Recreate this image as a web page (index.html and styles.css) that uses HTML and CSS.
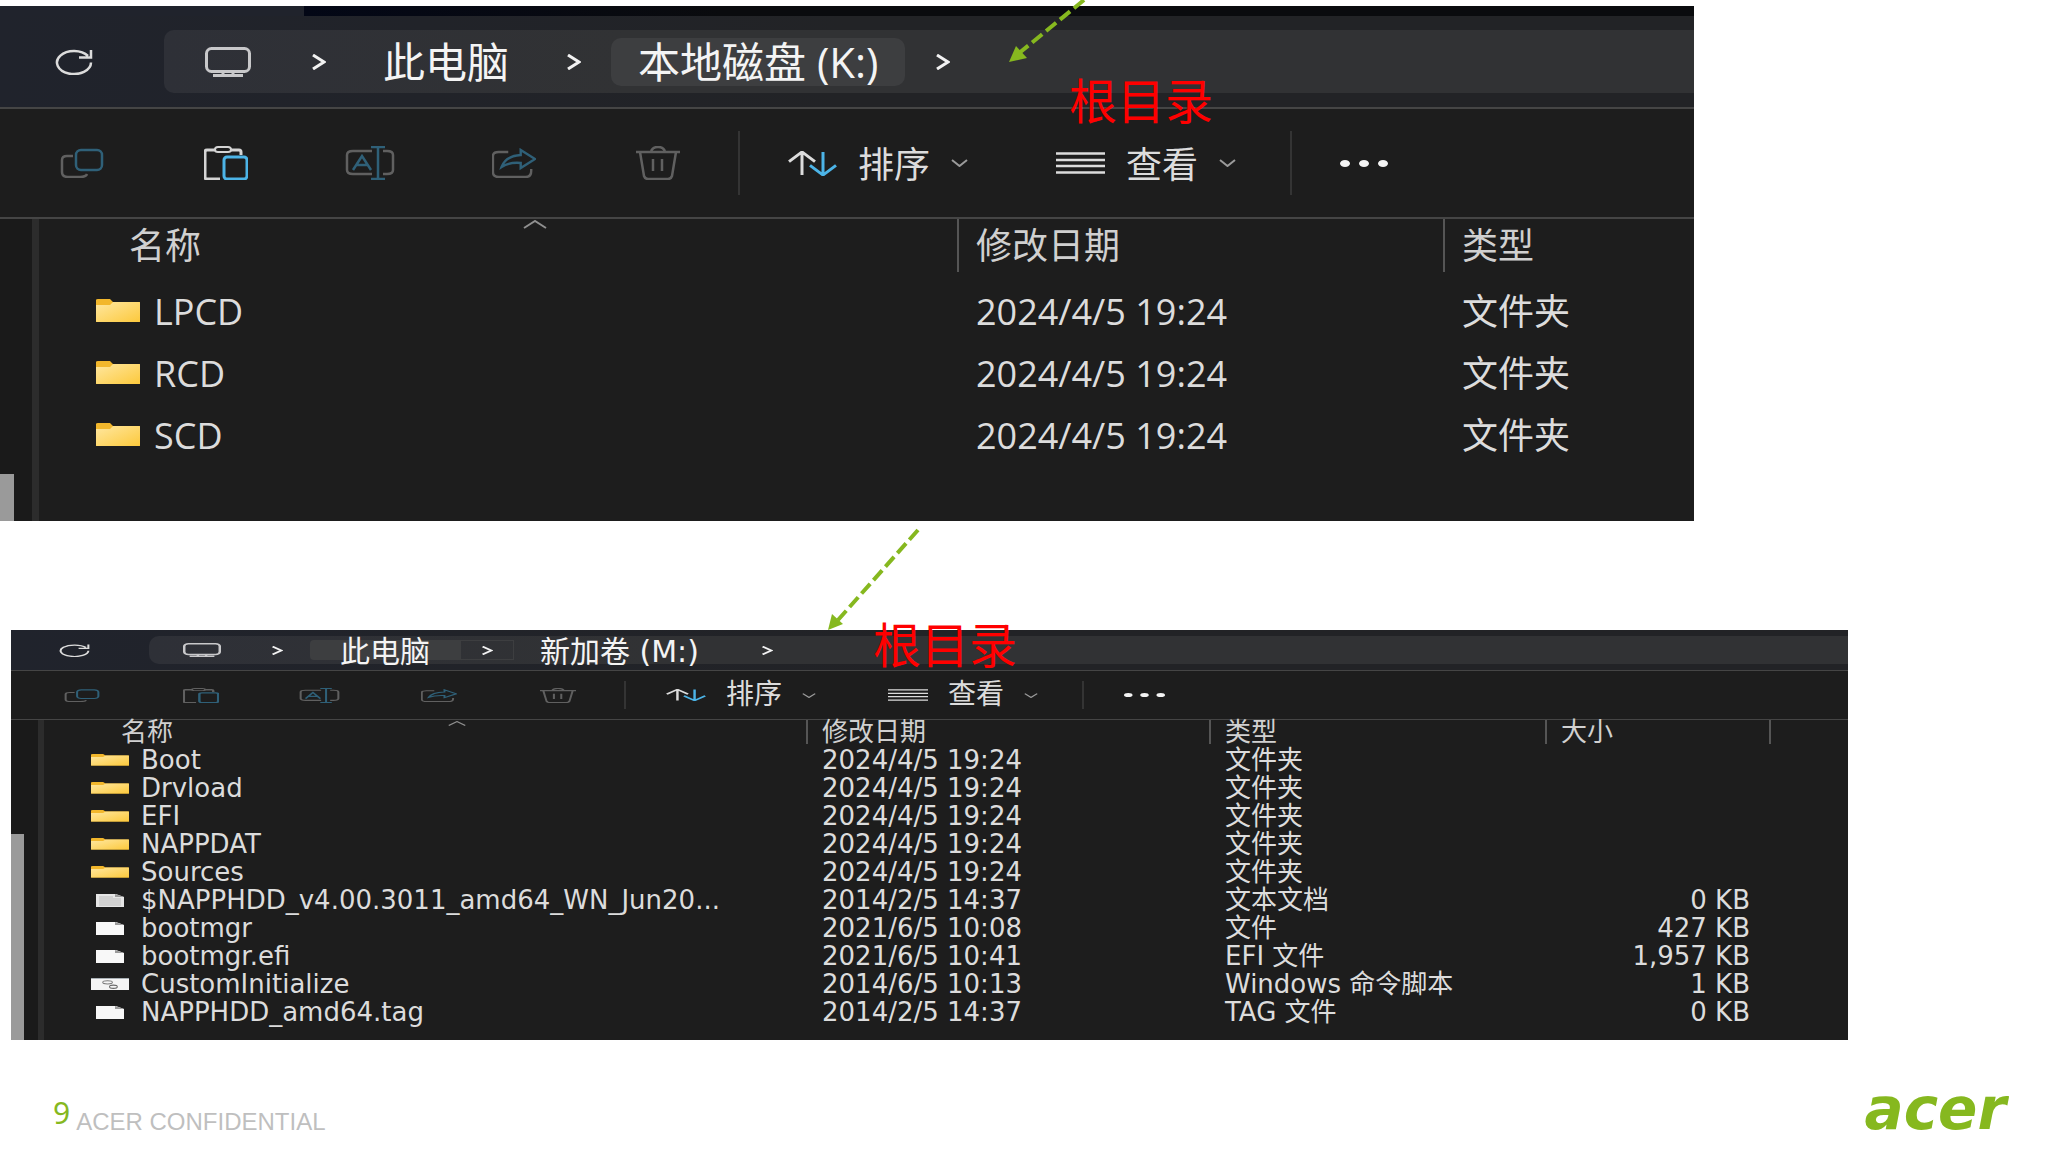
FILE: index.html
```html
<!DOCTYPE html>
<html lang="zh-CN">
<head>
    <meta charset="UTF-8">
    <meta name="viewport" content="width=device-width, initial-scale=1.0">
    <title>根目录</title>
    <link rel="stylesheet" href="styles.css">
</head>
<body>

    <!-- Shared icons -->
    <svg class="sprite" aria-hidden="true">
        <symbol id="refresh" viewBox="0 0 38 26" preserveAspectRatio="none">
            <path d="M36 13.500A17 11.500 0 1 1 33 7M36 1v7.500H24" fill="none" stroke="currentColor" stroke-width="2.500"/>
        </symbol>
        <symbol id="monitor" viewBox="0 0 46 30" preserveAspectRatio="none">
            <rect x="1.500" y="1.500" width="43" height="23" rx="5" fill="none" stroke="currentColor" stroke-width="3"/>
            <path d="M18 25v4M28 25v4M8 28.500h30" fill="none" stroke="currentColor" stroke-width="3"/>
        </symbol>
        <symbol id="right" viewBox="0 0 15 16" preserveAspectRatio="none">
            <path d="M2 1l11 7-11 7" fill="none" stroke="currentColor" stroke-width="3"/>
        </symbol>
        <symbol id="down" viewBox="0 0 17 8" preserveAspectRatio="none">
            <path d="M1 1l7.500 6L16 1" fill="none" stroke="currentColor" stroke-width="2"/>
        </symbol>
        <symbol id="up" viewBox="0 0 24 9" preserveAspectRatio="none">
            <path d="M1 8l11-7 11 7" fill="none" stroke="currentColor" stroke-width="2"/>
        </symbol>
        <symbol id="copy" viewBox="0 0 44 30" preserveAspectRatio="none">
            <path d="M13 8H7q-5 0-5 4v12q0 5 6 5h12q6 0 7-3" fill="none" stroke="currentColor" stroke-width="2.500"/>
            <rect x="16" y="2" width="26" height="20" rx="5" fill="none" stroke="var(--accent)" stroke-width="2.500"/>
        </symbol>
        <symbol id="paste" viewBox="0 0 44 34" preserveAspectRatio="none">
            <path d="M11 4H3q-2 0-2 2v25q0 2 2 2h13M26 4h9q2 0 2 2v3" fill="none" stroke="currentColor" stroke-width="3"/>
            <rect x="11" y="1" width="16" height="5" rx="3" fill="none" stroke="currentColor" stroke-width="2"/>
            <rect x="20" y="11" width="23" height="22" rx="3" fill="none" stroke="var(--accent)" stroke-width="3"/>
        </symbol>
        <symbol id="rename" viewBox="0 0 50 34" preserveAspectRatio="none">
            <path d="M27 5H8q-6 0-6 4v15q0 4 6 4h19M38 5h4q6 0 6 4v15q0 4-6 4h-4" fill="none" stroke="currentColor" stroke-width="2.500"/>
            <path d="M8 24l9-14 9 14M12 19h10M33 2v30M26 1h14M26 33h14" fill="none" stroke="var(--accent)" stroke-width="2.500"/>
        </symbol>
        <symbol id="share" viewBox="0 0 46 30" preserveAspectRatio="none">
            <path d="M17 4H7q-6 0-6 4v16q0 5 6 5h28q6 0 6-6v-2" fill="none" stroke="currentColor" stroke-width="2.500"/>
            <path d="M10 19q4-11 20-12V2l15 9-15 9v-5q-12-1-20 4z" fill="none" stroke="var(--accent)" stroke-width="2.500"/>
        </symbol>
        <symbol id="trash" viewBox="0 0 44 34" preserveAspectRatio="none">
            <path d="M0 6h44M4 6l4 24q1 3 4 3h20q3 0 4-3l4-24M15 6q1-5 7-5t7 5M17 13v12M26 13v12" fill="none" stroke="currentColor" stroke-width="2.500"/>
        </symbol>
        <symbol id="sort" viewBox="0 0 49 26" preserveAspectRatio="none">
            <path d="M14 25V2M1 11L14 1l13 10" fill="none" stroke="currentColor" stroke-width="3"/>
            <path d="M35 1v23M22 15l13 10 13-10" fill="none" stroke="var(--accent)" stroke-width="3"/>
        </symbol>
        <symbol id="lines" viewBox="0 0 48 22" preserveAspectRatio="none">
            <path d="M0 1.500h48M0 8h48M0 14h48M0 20.500h48" stroke="currentColor" stroke-width="2.500"/>
        </symbol>
        <symbol id="dots" viewBox="0 0 48 7" preserveAspectRatio="none">
            <ellipse cx="5" cy="3.500" rx="5" ry="3.500" fill="currentColor"/>
            <ellipse cx="24" cy="3.500" rx="5" ry="3.500" fill="currentColor"/>
            <ellipse cx="43" cy="3.500" rx="5" ry="3.500" fill="currentColor"/>
        </symbol>
        <linearGradient id="yellow" x1="0" y1="0" x2="1" y2="1">
            <stop offset="0" stop-color="#ffe7a0"/>
            <stop offset="1" stop-color="#fcc93c"/>
        </linearGradient>
        <symbol id="folder" viewBox="0 0 44 24" preserveAspectRatio="none">
            <path d="M0 1q0-1 2-1h12l3 3h27v20H0z" fill="#f2b72c"/>
            <path d="M0 6h14l3-3h26q1 0 1 1v18q0 1-1 1H1q-1 0-1-1z" fill="url(#yellow)"/>
        </symbol>
        <symbol id="file" viewBox="0 0 28 13" preserveAspectRatio="none">
            <path d="M0 0h20l8 3v10H0z" fill="#f8f8f8"/>
            <path d="M19 0v3h9z" fill="#9a9a9a"/>
        </symbol>
        <symbol id="textfile" viewBox="0 0 28 13" preserveAspectRatio="none">
            <path d="M0 0h20l8 3v10H0z" fill="#e6e6e6"/>
            <path d="M3 3h14M3 5h22M3 7h22M3 9h22M3 11h22" stroke="#bdbdbd"/>
            <path d="M19 0v3h9z" fill="#9a9a9a"/>
        </symbol>
        <symbol id="script" viewBox="0 0 39 11" preserveAspectRatio="none">
            <rect width="39" height="11" fill="#f4f4f4"/>
            <path d="M0 .5h39" stroke="#a9b0b5"/>
            <ellipse cx="17" cy="4" rx="5" ry="1.500" fill="none" stroke="#7b7b7b"/>
            <ellipse cx="23" cy="8" rx="4" ry="1.500" fill="none" stroke="#666"/>
        </symbol>
    </svg>

    <main>
        <!-- K: drive -->
        <section class="explorer drive-k">
            <div class="tab-strip"></div>
            <nav class="nav-bar">
                <button class="refresh" aria-label="刷新"><svg><use href="#refresh"/></svg></button>
                <div class="address">
                    <svg class="monitor"><use href="#monitor"/></svg>
                    <svg class="chevron first"><use href="#right"/></svg>
                    <a class="crumb" href="#">此电脑</a>
                    <svg class="chevron"><use href="#right"/></svg>
                    <a class="crumb active" href="#">本地磁盘 (K:)</a>
                    <svg class="chevron"><use href="#right"/></svg>
                </div>
            </nav>
            <div class="toolbar">
                <button class="tool" aria-label="复制"><svg class="short"><use href="#copy"/></svg></button>
                <button class="tool enabled" aria-label="粘贴"><svg><use href="#paste"/></svg></button>
                <button class="tool" aria-label="重命名"><svg class="wide"><use href="#rename"/></svg></button>
                <button class="tool" aria-label="共享"><svg class="short"><use href="#share"/></svg></button>
                <button class="tool" aria-label="删除"><svg><use href="#trash"/></svg></button>
                <span class="divider"></span>
                <button class="menu sort"><svg class="menu-icon"><use href="#sort"/></svg><span>排序</span><svg class="caret"><use href="#down"/></svg></button>
                <button class="menu view"><svg class="menu-icon"><use href="#lines"/></svg><span>查看</span><svg class="caret"><use href="#down"/></svg></button>
                <span class="divider last"></span>
                <button class="more" aria-label="更多"><svg><use href="#dots"/></svg></button>
            </div>
            <div class="content">
                <div class="side"><div class="thumb"></div></div>
                <div class="splitter"></div>
                <table>
                    <colgroup><col class="col-name"><col class="col-date"><col></colgroup>
                    <thead>
                        <tr>
                            <th><div>名称<svg class="sorted"><use href="#up"/></svg></div></th>
                            <th><div>修改日期</div></th>
                            <th><div>类型</div></th>
                        </tr>
                    </thead>
                    <tbody>
                        <tr><td><span class="icon"><svg><use href="#folder"/></svg></span>LPCD</td><td>2024/4/5 19:24</td><td>文件夹</td></tr>
                        <tr><td><span class="icon"><svg><use href="#folder"/></svg></span>RCD</td><td>2024/4/5 19:24</td><td>文件夹</td></tr>
                        <tr><td><span class="icon"><svg><use href="#folder"/></svg></span>SCD</td><td>2024/4/5 19:24</td><td>文件夹</td></tr>
                    </tbody>
                </table>
            </div>
            <svg class="arrow" viewBox="0 0 100 110">
                <path d="M84 0L18 54" />
                <polygon points="9,62 16,46 27,58"/>
            </svg>
            <p class="note">根目录</p>
        </section>

        <!-- M: drive -->
        <section class="explorer drive-m">
            <nav class="nav-bar">
                <button class="refresh" aria-label="刷新"><svg><use href="#refresh"/></svg></button>
                <div class="address">
                    <svg class="monitor"><use href="#monitor"/></svg>
                    <svg class="chevron first"><use href="#right"/></svg>
                    <a class="crumb active" href="#">此电脑</a>
                    <span class="chevron-box"><svg class="chevron"><use href="#right"/></svg></span>
                    <a class="crumb volume" href="#">新加卷 (M:)</a>
                    <svg class="chevron"><use href="#right"/></svg>
                </div>
            </nav>
            <div class="toolbar">
                <button class="tool" aria-label="复制"><svg class="short"><use href="#copy"/></svg></button>
                <button class="tool" aria-label="粘贴"><svg><use href="#paste"/></svg></button>
                <button class="tool" aria-label="重命名"><svg class="wide"><use href="#rename"/></svg></button>
                <button class="tool" aria-label="共享"><svg class="short"><use href="#share"/></svg></button>
                <button class="tool" aria-label="删除"><svg><use href="#trash"/></svg></button>
                <span class="divider"></span>
                <button class="menu sort"><svg class="menu-icon"><use href="#sort"/></svg><span>排序</span><svg class="caret"><use href="#down"/></svg></button>
                <button class="menu view"><svg class="menu-icon"><use href="#lines"/></svg><span>查看</span><svg class="caret"><use href="#down"/></svg></button>
                <span class="divider last"></span>
                <button class="more" aria-label="更多"><svg><use href="#dots"/></svg></button>
            </div>
            <div class="content">
                <div class="side"><div class="thumb"></div></div>
                <div class="splitter"></div>
                <table>
                    <colgroup><col class="col-name"><col class="col-date"><col class="col-type"><col class="col-size"><col></colgroup>
                    <thead>
                        <tr>
                            <th><div>名称<svg class="sorted"><use href="#up"/></svg></div></th>
                            <th><div>修改日期</div></th>
                            <th><div>类型</div></th>
                            <th><div>大小</div></th>
                            <th><div></div></th>
                        </tr>
                    </thead>
                    <tbody>
                        <tr><td><span class="icon"><svg><use href="#folder"/></svg></span>Boot</td><td>2024/4/5 19:24</td><td>文件夹</td><td></td><td></td></tr>
                        <tr><td><span class="icon"><svg><use href="#folder"/></svg></span>Drvload</td><td>2024/4/5 19:24</td><td>文件夹</td><td></td><td></td></tr>
                        <tr><td><span class="icon"><svg><use href="#folder"/></svg></span>EFI</td><td>2024/4/5 19:24</td><td>文件夹</td><td></td><td></td></tr>
                        <tr><td><span class="icon"><svg><use href="#folder"/></svg></span>NAPPDAT</td><td>2024/4/5 19:24</td><td>文件夹</td><td></td><td></td></tr>
                        <tr><td><span class="icon"><svg><use href="#folder"/></svg></span>Sources</td><td>2024/4/5 19:24</td><td>文件夹</td><td></td><td></td></tr>
                        <tr><td><span class="icon"><svg class="doc"><use href="#textfile"/></svg></span>$NAPPHDD_v4.00.3011_amd64_WN_Jun20...</td><td>2014/2/5 14:37</td><td>文本文档</td><td>0 KB</td><td></td></tr>
                        <tr><td><span class="icon"><svg class="doc"><use href="#file"/></svg></span>bootmgr</td><td>2021/6/5 10:08</td><td>文件</td><td>427 KB</td><td></td></tr>
                        <tr><td><span class="icon"><svg class="doc"><use href="#file"/></svg></span>bootmgr.efi</td><td>2021/6/5 10:41</td><td>EFI 文件</td><td>1,957 KB</td><td></td></tr>
                        <tr><td><span class="icon"><svg><use href="#script"/></svg></span>CustomInitialize</td><td>2014/6/5 10:13</td><td>Windows 命令脚本</td><td>1 KB</td><td></td></tr>
                        <tr><td><span class="icon"><svg class="doc"><use href="#file"/></svg></span>NAPPHDD_amd64.tag</td><td>2014/2/5 14:37</td><td>TAG 文件</td><td>0 KB</td><td></td></tr>
                    </tbody>
                </table>
            </div>
            <svg class="arrow" viewBox="0 0 100 110">
                <path d="M97 4L17 94" />
                <polygon points="7,104 11,88 22,98"/>
            </svg>
            <p class="note">根目录</p>
        </section>
    </main>

    <footer>
        <span class="page-number">9</span>
        <span class="confidential">ACER CONFIDENTIAL</span>
        <span class="logo">acer</span>
    </footer>

</body>
</html>
```

FILE: styles.css
```css
* {
    box-sizing: border-box;
}

body {
    margin: 0;
    background-color: #ffffff;
    font-family: "Open Sans", "Noto Sans CJK SC", sans-serif;
}

main {
    padding-top: 6px;
}

.sprite {
    position: absolute;
    width: 0;
    height: 0;
}

svg {
    display: block;
    flex: none;
}

button {
    display: flex;
    align-items: center;
    padding: 0;
    border: none;
    background: none;
    color: inherit;
    font: inherit;
    cursor: pointer;
}

/* Explorer window */
.explorer {
    position: relative;
    background-color: #1d1d1d;
    color: #dcdcdc;
    --accent: #4cb4e7;
}

.nav-bar {
    display: flex;
    align-items: center;
    background: linear-gradient(90deg, #20232c, #222326 50%);
    border-bottom: 2px solid #454545;
}

.address {
    flex: 1;
    display: flex;
    align-items: center;
    background: linear-gradient(90deg, #2e3037, #313234 30%);
    border-radius: 10px 0 0 10px;
}

.monitor {
    color: #c8c8ca;
}

.chevron {
    color: #f2f2f2;
}

.crumb {
    display: flex;
    align-items: center;
    justify-content: center;
    color: #f4f4f4;
    text-decoration: none;
    white-space: nowrap;
}

.crumb.active {
    background-color: #3d3e40;
    border-radius: 10px;
}

/* Toolbar */
.toolbar {
    display: flex;
    align-items: center;
    border-bottom: 2px solid #454545;
}

.tool {
    justify-content: center;
    color: #606060;
    --accent: #2f6078;
}

.tool.enabled {
    color: #d4d4d4;
    --accent: #4cb4e7;
}

.divider {
    width: 2px;
    background-color: #343434;
}

.caret {
    color: #9b9b9b;
}

.more {
    color: #f4f4f4;
}

/* File list */
.content {
    display: flex;
}

.side {
    display: flex;
    align-items: flex-end;
    background-color: #1a1a1a;
}

.thumb {
    background-color: #9a9a9a;
}

.splitter {
    background-color: #2c2c2c;
}

table {
    flex: 1;
    align-self: flex-start;
    table-layout: fixed;
    width: 100%;
    border-collapse: collapse;
}

th, td {
    padding: 0;
    text-align: left;
    font-weight: normal;
    white-space: nowrap;
}

th {
    vertical-align: top;
    color: #d0d0d0;
}

th div {
    position: relative;
    border-left: 2px solid #555555;
}

th:first-child div {
    border-left: none;
}

.sorted {
    position: absolute;
    top: 1px;
    color: #8f8f8f;
}

.icon {
    display: inline-flex;
    justify-content: center;
    vertical-align: middle;
}

/* K: window */
.drive-k {
    margin-right: 354px;
    font-size: 36px;
}

.drive-k .tab-strip {
    height: 10px;
    background: linear-gradient(90deg, #030716, #0a0b0e 30%);
    border-left: 304px solid #20232c;
}

.drive-k .nav-bar {
    padding: 14px 0;
    font-size: 42px;
}

.drive-k .refresh {
    margin: 0 71px 0 55px;
}

.drive-k .refresh svg {
    width: 38px;
    height: 26px;
}

.drive-k .address {
    gap: 30px;
    height: 63px;
    padding-left: 41px;
}

.drive-k .monitor {
    width: 46px;
    height: 30px;
}

.drive-k .chevron {
    width: 15px;
    height: 16px;
}

.drive-k .first {
    margin-left: 30px;
}

.drive-k .crumb {
    height: 48px;
    padding: 0 27px 4px;
}

.drive-k .crumb.active {
    min-width: 294px;
}

.drive-k .toolbar {
    height: 110px;
    padding-left: 10px;
}

.drive-k .tool {
    width: 144px;
}

.drive-k .tool svg {
    width: 44px;
    height: 34px;
}

.drive-k .tool .wide {
    width: 50px;
}

.drive-k .tool .short {
    height: 30px;
}

.drive-k .divider {
    height: 64px;
    margin: 0 48px 0 8px;
}

.drive-k .divider.last {
    margin-left: 54px;
}

.drive-k .menu {
    gap: 20px;
}

.drive-k .menu span {
    min-width: 74px;
    padding-bottom: 2px;
}

.drive-k .view {
    margin-left: 88px;
}

.drive-k .menu-icon {
    width: 49px;
    height: 25px;
}

.drive-k .view .menu-icon {
    height: 22px;
}

.drive-k .caret {
    width: 17px;
    height: 8px;
}

.drive-k .more svg {
    width: 48px;
    height: 7px;
}

.drive-k .content {
    height: 302px;
}

.drive-k .side {
    width: 32px;
}

.drive-k .thumb {
    width: 14px;
    height: 47px;
}

.drive-k .splitter {
    width: 7px;
}

.drive-k .col-name {
    width: 918px;
}

.drive-k .col-date {
    width: 486px;
}

.drive-k th {
    height: 62px;
}

.drive-k th div {
    height: 53px;
    line-height: 53px;
    padding-left: 17px;
}

.drive-k th:first-child div {
    padding-left: 90px;
}

.drive-k .sorted {
    left: 484px;
    width: 24px;
    height: 9px;
}

.drive-k td {
    height: 62px;
    line-height: 60px;
    padding-left: 19px;
}

.drive-k td:first-child {
    padding-left: 57px;
}

.drive-k .icon {
    margin: 0 14px 8px 0;
}

.drive-k .icon svg {
    width: 44px;
    height: 24px;
}

/* M: window, a short and wide one */
.drive-m {
    margin: 109px 200px 0 11px;
    font-family: "DejaVu Sans", "Noto Sans CJK SC", sans-serif;
    font-size: 26px;
}

.drive-m .nav-bar,
.drive-m .toolbar {
    border-bottom-width: 1px;
}

.drive-m .nav-bar {
    padding: 6px 0;
    font-size: 30px;
}

.drive-m .refresh {
    margin: 0 59px 0 48px;
}

.drive-m .refresh svg {
    width: 31px;
    height: 13px;
}

.drive-m .address {
    height: 28px;
    padding-left: 34px;
}

.drive-m .monitor {
    width: 38px;
    height: 14px;
}

.drive-m .chevron {
    width: 12px;
    height: 9px;
}

.drive-m .first {
    margin: 0 27px 0 50px;
}

.drive-m .crumb {
    height: 20px;
    padding-bottom: 2px;
}

.drive-m .crumb.active {
    width: 150px;
    border-radius: 4px 0 0 4px;
}

.drive-m .chevron-box {
    display: flex;
    align-items: center;
    justify-content: center;
    width: 54px;
    height: 20px;
    border: 1px solid #3d3e40;
}

.drive-m .volume {
    justify-content: flex-start;
    width: 221px;
    margin-left: 26px;
}

.drive-m .toolbar {
    height: 49px;
    padding-left: 11px;
    font-size: 28px;
}

.drive-m .tool {
    width: 119px;
}

.drive-m .tool svg {
    width: 36px;
    height: 15px;
}

.drive-m .tool .wide {
    width: 41px;
}

.drive-m .tool .short {
    height: 13px;
}

.drive-m .divider {
    height: 28px;
    margin: 0 40px 0 7px;
}

.drive-m .divider.last {
    margin-left: 44px;
}

.drive-m .menu {
    gap: 18px;
    line-height: 30px;
}

.drive-m .menu span {
    min-width: 60px;
}

.drive-m .view {
    margin-left: 72px;
}

.drive-m .menu-icon {
    width: 40px;
    height: 12px;
}

.drive-m .caret {
    width: 14px;
    height: 5px;
}

.drive-m .more svg {
    width: 41px;
    height: 4px;
}

.drive-m .content {
    height: 320px;
}

.drive-m .side {
    width: 27px;
}

.drive-m .thumb {
    width: 13px;
    height: 206px;
}

.drive-m .splitter {
    width: 6px;
}

.drive-m .col-name {
    width: 762px;
}

.drive-m .col-date {
    width: 403px;
}

.drive-m .col-type {
    width: 336px;
}

.drive-m .col-size {
    width: 224px;
}

.drive-m th {
    height: 26px;
}

.drive-m th div {
    height: 24px;
    line-height: 24px;
    padding-left: 14px;
}

.drive-m th:first-child div {
    padding-left: 77px;
}

.drive-m .sorted {
    left: 404px;
    width: 18px;
    height: 5px;
}

.drive-m td {
    height: 28px;
    line-height: 28px;
    padding-left: 16px;
}

.drive-m td:first-child {
    padding-left: 47px;
}

.drive-m td:nth-child(4) {
    padding-right: 19px;
    text-align: right;
}

.drive-m .icon {
    width: 38px;
    margin: 0 12px 3px 0;
}

.drive-m .icon svg {
    width: 38px;
    height: 12px;
}

.drive-m .icon .doc {
    width: 28px;
    height: 13px;
}

/* Arrows and red notes lying over the windows */
.arrow {
    position: absolute;
    width: 100px;
    height: 110px;
}

.arrow path {
    fill: none;
    stroke: #86b81f;
    stroke-width: 4;
    stroke-dasharray: 13 5;
}

.arrow polygon {
    fill: #86b81f;
}

.note {
    position: absolute;
    margin: 0;
    color: #ff0000;
    font-family: "Noto Sans CJK SC", sans-serif;
    font-size: 48px;
    line-height: 48px;
}

.drive-k .arrow {
    left: 1000px;
    top: -6px;
}

.drive-k .note {
    left: 1069px;
    top: 68px;
}

.drive-m .arrow {
    left: 810px;
    top: -104px;
}

.drive-m .note {
    left: 862px;
    top: -12px;
}

/* Footer */
footer {
    display: flex;
    align-items: flex-start;
    padding: 42px 42px 0 53px;
}

.page-number {
    margin-top: 10px;
    color: #86b81f;
    font-family: "Noto Sans", sans-serif;
    font-size: 30px;
    line-height: 42px;
}

.confidential {
    margin: 26px 0 0 6px;
    color: #bfbfbf;
    font-family: "Liberation Sans", sans-serif;
    font-size: 24px;
    line-height: 28px;
}

.logo {
    margin-left: auto;
    color: #86b81f;
    font-family: "DejaVu Sans", sans-serif;
    font-size: 58px;
    font-style: italic;
    font-weight: bold;
    line-height: 54px;
}
```
